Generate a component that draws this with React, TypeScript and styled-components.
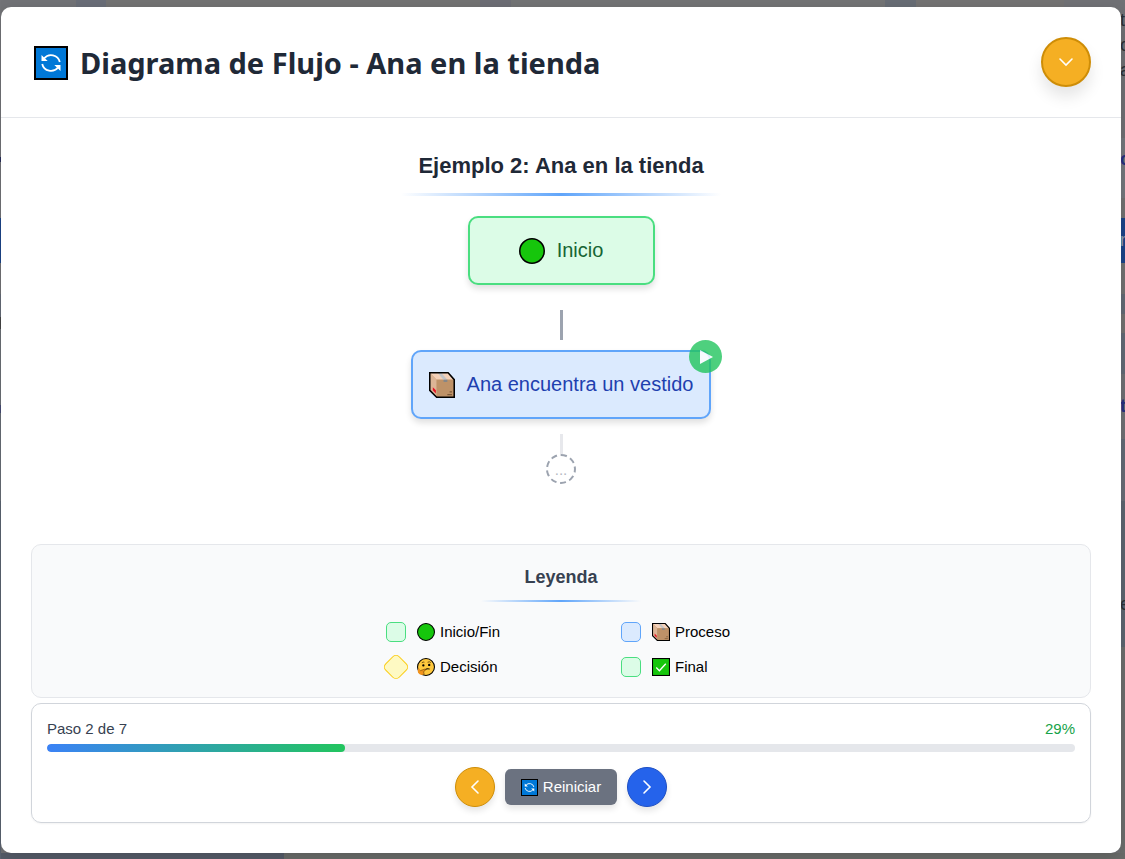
import React from "react";
import styled, { createGlobalStyle, css } from "styled-components";

const GlobalStyle = createGlobalStyle`
  *, *::before, *::after { box-sizing: border-box; }
  html, body { margin: 0; padding: 0; }
  body {
    background: #717275;
    font-family: Arial, "Liberation Sans", sans-serif;
    font-size: 15px;
    color: #111111;
  }
  h1, h2, h3, p { margin: 0; }
  button { font-family: inherit; cursor: pointer; }
`;

/* ---------- dimmed page behind the dialog ---------- */

const Overlay = styled.div`
  position: relative;
  display: flex;
  min-height: 100vh;
  padding: 7px 4px 6px 1px;
  overflow: hidden;
`;

const PageBehind = styled.div`
  position: absolute;
  inset: 0;
  display: flex;
  justify-content: space-between;
  overflow: hidden;
  background:
    linear-gradient(90deg, #717276 76px, #696d77 76px 106px, #727272 106px 480px,
      #6c6d74 480px 511px, #727374 511px 885px, #676c74 885px 916px,
      #737272 916px 1064px, #707175 1064px) top / 100% 7px no-repeat,
    linear-gradient(90deg, #555c69 284px, #6a6c6a 284px) bottom / 100% 6px no-repeat,
    #717275;
`;

const Sliver = styled.div<{ $width: number }>`
  display: flex;
  flex-direction: column;
  width: ${(p) => p.$width}px;
  overflow: hidden;
`;

const Band = styled.div<{ $height: number; $color: string; $ink?: string }>`
  flex: none;
  height: ${(p) => p.$height}px;
  background: ${(p) => p.$color};
  color: ${(p) => p.$ink ?? "#2c3036"};
  font-size: 18px;
  line-height: 25px;
  padding-top: ${(p) => (p.$height > 100 ? 8 : 0)}px;
  display: flex;
  flex-direction: column;
  justify-content: ${(p) => (p.$height > 100 ? "flex-start" : "center")};
`;

/* ---------- dialog ---------- */

const Dialog = styled.section`
  position: relative;
  flex: 1;
  min-width: 0;
  display: flex;
  flex-direction: column;
  background: #ffffff;
  border-radius: 10px;
  box-shadow: 0 5px 15px rgba(0, 0, 0, 0.15);
`;

const Header = styled.header`
  display: flex;
  align-items: flex-start;
  justify-content: space-between;
  padding: 30px;
  border-bottom: 1px solid #e5e7eb;
`;

const Title = styled.h1`
  display: flex;
  align-items: center;
  gap: 12px;
  padding: 2px 0 0 3px;
  font-family: "Segoe UI", "Noto Sans", "Open Sans", sans-serif;
  font-size: 29px;
  line-height: 50px;
  height: 50px;
  font-weight: 700;
  color: #1f2937;
`;

const tones = {
  amber: css`
    background: #f5af23;
    border-color: #ce8d07;
  `,
  blue: css`
    background: #2563eb;
    border-color: #1e4fc4;
  `,
};

const RoundButton = styled.button<{ $size: number; $tone: keyof typeof tones }>`
  flex: none;
  display: flex;
  align-items: center;
  justify-content: center;
  width: ${(p) => p.$size}px;
  height: ${(p) => p.$size}px;
  padding: 0;
  border: ${(p) => (p.$size > 40 ? 2 : 1)}px solid;
  border-radius: 50%;
  color: #ffffff;
  box-shadow: ${(p) =>
    p.$size > 40
      ? "0 10px 15px rgba(0, 0, 0, 0.1)"
      : "0 4px 6px rgba(0, 0, 0, 0.1)"};
  ${(p) => tones[p.$tone]}
`;

const Body = styled.main`
  flex: 1;
  display: flex;
  flex-direction: column;
  padding: 30px;
`;

const Diagram = styled.div`
  flex: 1;
  display: flex;
  flex-direction: column;
  align-items: center;
  padding-bottom: 60px;
`;

const DiagramTitle = styled.h2`
  width: 320px;
  max-width: 100%;
  margin-bottom: 20px;
  text-align: center;
  font-size: 22px;
  line-height: 35px;
  color: #1f2937;
  white-space: nowrap;

  &::after {
    content: "";
    display: block;
    height: 3px;
    margin-top: 10px;
    background: linear-gradient(90deg, transparent, #60a5fa, transparent);
  }
`;

const nodeTones = {
  green: css`
    background: #dcfce7;
    border-color: #4ade80;
    color: #166534;
  `,
  blue: css`
    background: #dbeafe;
    border-color: #60a5fa;
    color: #1e40af;
  `,
  yellow: css`
    background: #fef9c3;
    border-color: #facc15;
  `,
};

const Node = styled.div<{ $tone: keyof typeof nodeTones }>`
  position: relative;
  display: flex;
  align-items: center;
  justify-content: center;
  gap: 12px;
  min-width: 187px;
  height: 69px;
  padding: 0 16px;
  border: 2px solid;
  border-radius: 10px;
  box-shadow: 0 4px 6px rgba(0, 0, 0, 0.12);
  font-size: 20px;
  white-space: nowrap;
  ${(p) => nodeTones[p.$tone]}
`;

const PlayBadge = styled.span`
  position: absolute;
  top: -12px;
  right: -13px;
  display: flex;
  align-items: center;
  justify-content: center;
  width: 33px;
  height: 33px;
  border-radius: 50%;
  background: #22c55e;
  opacity: 0.8;
`;

const Connector = styled.div<{ $pending?: boolean }>`
  width: 3px;
  height: ${(p) => (p.$pending ? 20 : 30)}px;
  margin: ${(p) => (p.$pending ? "15px 0 0" : "25px 0 10px")};
  background: ${(p) => (p.$pending ? "#e7e8ec" : "#9ca3af")};
`;

const PendingStep = styled.div`
  display: flex;
  align-items: center;
  justify-content: center;
  width: 30px;
  height: 30px;
  border: 2px dashed #9ca3af;
  border-radius: 50%;
  color: #b4b9c2;
  font-size: 15px;
`;

/* ---------- legend ---------- */

const Legend = styled.section`
  display: flex;
  flex-direction: column;
  align-items: center;
  padding: 20px;
  margin-bottom: 5px;
  background: #f9fafb;
  border: 1px solid #e5e7eb;
  border-radius: 10px;
`;

const LegendTitle = styled.h3`
  width: 160px;
  margin-bottom: 20px;
  text-align: center;
  font-size: 18px;
  line-height: 25px;
  color: #374151;

  &::after {
    content: "";
    display: block;
    height: 2px;
    margin-top: 10px;
    background: linear-gradient(90deg, transparent, #60a5fa, transparent);
  }
`;

const LegendGrid = styled.ul`
  display: grid;
  grid-template-columns: 115px 115px;
  gap: 15px 120px;
  margin: 0;
  padding: 0;
  list-style: none;
`;

const LegendItem = styled.li`
  display: flex;
  align-items: center;
  gap: 11px;
  height: 20px;
  color: #000000;
  white-space: nowrap;
`;

const Swatch = styled.span<{ $tone: keyof typeof nodeTones; $diamond?: boolean }>`
  flex: none;
  width: 20px;
  height: 20px;
  border: 1px solid;
  border-radius: 5px;
  ${(p) => nodeTones[p.$tone]}
  ${(p) => p.$diamond && "transform: rotate(45deg);"}
`;

const IconLabel = styled.span`
  display: flex;
  align-items: center;
  gap: 5px;
  line-height: 18px;
`;

/* ---------- progress ---------- */

const ProgressCard = styled.section`
  padding: 15px;
  border: 1px solid #d1d5db;
  border-radius: 10px;
  box-shadow: 0 1px 2px rgba(0, 0, 0, 0.05);
`;

const ProgressHead = styled.div`
  display: flex;
  justify-content: space-between;
  margin-bottom: 5px;
  line-height: 20px;
  color: #374151;
`;

const Percent = styled.span`
  color: #16a34a;
`;

const Track = styled.div`
  height: 8px;
  border-radius: 4px;
  background: #e5e7eb;
  overflow: hidden;
`;

const Fill = styled.div`
  height: 100%;
  border-radius: 4px;
  background: linear-gradient(90deg, #3b82f6, #22c55e);
`;

const Controls = styled.div`
  display: flex;
  align-items: center;
  justify-content: center;
  gap: 10px;
  margin-top: 15px;
`;

const ResetButton = styled.button`
  display: flex;
  align-items: center;
  gap: 5px;
  height: 36px;
  padding: 0 16px;
  border: 0;
  border-radius: 6px;
  background: #6b7280;
  color: #ffffff;
  font-size: 15px;
  line-height: 18px;
  box-shadow: 0 4px 6px rgba(0, 0, 0, 0.1);
`;

/* ---------- drawings ---------- */

type IconProps = { size: number };

const Svg = ({ size, children }: IconProps & { children: React.ReactNode }) => (
  <svg width={size} height={size} viewBox="0 0 34 34" aria-hidden="true">
    {children}
  </svg>
);

const RefreshIcon = ({ size }: IconProps) => (
  <Svg size={size}>
    <rect x="1" y="1" width="32" height="32" fill="#0078d7" stroke="#000" strokeWidth="2" />
    <g fill="none" stroke="#fff" strokeWidth="1.8">
      <path d="M10 12.500A9 9 0 0 1 25.800 16" />
      <path d="M24 21.500A9 9 0 0 1 8.200 18" />
    </g>
    <path d="M7.500 9v6h6.200z M26.500 25V19h-6.200z" fill="#fff" />
  </Svg>
);

const GreenCircleIcon = ({ size }: IconProps) => (
  <Svg size={size}>
    <circle cx="17" cy="17" r="16" fill="#16c60c" stroke="#000" strokeWidth="2" />
  </Svg>
);

const PackageIcon = ({ size }: IconProps) => (
  <Svg size={size}>
    <path d="M1 1h24l8 9v23H10L1 24z" fill="#c69a6e" />
    <path d="M1 1h24l8 9H10z" fill="#f4d1b9" />
    <path d="M1 1l9 9v23l-9-9z" fill="#dcb596" />
    <path d="M10 10h23v23H10z" fill="#be9268" />
    <path d="M11 1h5l8 9h-5z" fill="#c3c4c6" />
    <path d="M19 10h5v3h-5z" fill="#84868a" />
    <path d="M5 20l4 4v4l-4-4z" fill="#e81224" />
    <path d="M27 26h3M24 29.500h6" stroke="#7b5938" strokeWidth="1.500" />
    <path d="M1 1h24l8 9v23H10L1 24z" fill="none" stroke="#000" strokeWidth="2" />
  </Svg>
);

const ThinkingIcon = ({ size }: IconProps) => (
  <Svg size={size}>
    <circle cx="17" cy="17" r="16" fill="#ffc83d" stroke="#000" strokeWidth="2" />
    <circle cx="12" cy="14" r="2.200" fill="#000" />
    <circle cx="23" cy="13" r="2.200" fill="#000" />
    <path d="M9 9q3-2 5-1M20 8q4-2 6 1" fill="none" stroke="#5c3b06" strokeWidth="1.600" />
    <path d="M15 22q5-3 9-1" fill="none" stroke="#000" strokeWidth="2" />
    <path d="M2 20q4-1 4 4l9-3q3 1 0 3l-3 2q3 3 0 5-6 3-10-3-1-4 0-8z" fill="#f0921c" />
    <path
      d="M6 24l9-3q3 1 0 3l-3 2q3 3 0 5"
      fill="none"
      stroke="#7a4a08"
      strokeWidth="1.300"
    />
  </Svg>
);

const CheckIcon = ({ size }: IconProps) => (
  <Svg size={size}>
    <rect x="1" y="1" width="32" height="32" fill="#16c60c" stroke="#000" strokeWidth="2" />
    <path d="M8 18l6 6L26 11" fill="none" stroke="#fff" strokeWidth="2.500" />
  </Svg>
);

const Chevron = ({ d, w, h }: { d: string; w: number; h: number }) => (
  <svg width={w} height={h} viewBox={`0 0 ${w} ${h}`} aria-hidden="true">
    <path d={d} fill="none" stroke="currentColor" strokeWidth="1.6" strokeLinecap="round" />
  </svg>
);

/* ---------- page ---------- */

const legend = [
  { label: "Inicio/Fin", tone: "green", Icon: GreenCircleIcon },
  { label: "Proceso", tone: "blue", Icon: PackageIcon },
  { label: "Decisión", tone: "yellow", Icon: ThinkingIcon, diamond: true },
  { label: "Final", tone: "green", Icon: CheckIcon },
] as const;

const step = 2;
const total = 7;
const percent = Math.round((step / total) * 100);

export default function App() {
  return (
    <>
      <GlobalStyle />
      <Overlay>
        <PageBehind aria-hidden="true">
          <Sliver $width={1}>
            <Band $height={157} $color="#727377" />
            <Band $height={5} $color="#272e5a" />
            <Band $height={56} $color="#727377" />
            <Band $height={45} $color="#1b4489" />
            <Band $height={31} $color="#717275" />
            <Band $height={23} $color="#656b77" />
            <Band $height={12} $color="#454545" />
            <Band $height={76} $color="#6b6f76" />
            <Band $height={8} $color="#454b74" />
            <Band $height={88} $color="#686d76" />
            <Band $height={358} $color="#5b6370" />
          </Sliver>
          <Sliver $width={5}>
            <Band $height={138} $color="#707175">
              <span>t</span>
              <span>o</span>
              <span>a</span>
            </Band>
            <Band $height={42} $color="#74787d" $ink="#273080">
              <b>o</b>
            </Band>
            <Band $height={18} $color="#74787d" />
            <Band $height={20} $color="#727272" />
            <Band $height={45} $color="#1b4489" $ink="#8f98a8">
              r
            </Band>
            <Band $height={31} $color="#727272" />
            <Band $height={20} $color="#636a75" />
            <Band $height={19} $color="#737271" />
            <Band $height={41} $color="#626a76" />
            <Band $height={65} $color="#6f7175" $ink="#273080">
              <b>ta</b>
            </Band>
            <Band $height={31} $color="#626a76" />
            <Band $height={31} $color="#686d77" />
            <Band $height={83} $color="#5d6671" />
            <Band $height={40} $color="#5d6671">
              e
            </Band>
            <Band $height={23} $color="#5d6671" />
            <Band $height={206} $color="#6c6e6d" />
          </Sliver>
        </PageBehind>

        <Dialog role="dialog" aria-labelledby="dialog-title">
          <Header>
            <Title id="dialog-title">
              <RefreshIcon size={34} />
              Diagrama de Flujo - Ana en la tienda
            </Title>
            <RoundButton type="button" $size={50} $tone="amber" aria-label="Minimizar">
              <Chevron w={16} h={10} d="M2 2l6 6 6-6" />
            </RoundButton>
          </Header>

          <Body>
            <Diagram>
              <DiagramTitle>Ejemplo 2: Ana en la tienda</DiagramTitle>
              <Node $tone="green">
                <GreenCircleIcon size={26} />
                Inicio
              </Node>
              <Connector />
              <Node $tone="blue">
                <PackageIcon size={26} />
                Ana encuentra un vestido
                <PlayBadge>
                  <svg width="14" height="16" viewBox="0 0 14 16" aria-hidden="true">
                    <path d="M1 1l13 7-13 7z" fill="#fff" />
                  </svg>
                </PlayBadge>
              </Node>
              <Connector $pending />
              <PendingStep>...</PendingStep>
            </Diagram>

            <Legend>
              <LegendTitle>Leyenda</LegendTitle>
              <LegendGrid>
                {legend.map(({ label, tone, Icon, ...rest }) => (
                  <LegendItem key={label}>
                    <Swatch $tone={tone} $diamond={"diamond" in rest} />
                    <IconLabel>
                      <Icon size={18} />
                      {label}
                    </IconLabel>
                  </LegendItem>
                ))}
              </LegendGrid>
            </Legend>

            <ProgressCard>
              <ProgressHead>
                <span>
                  Paso {step} de {total}
                </span>
                <Percent>{percent}%</Percent>
              </ProgressHead>
              <Track
                role="progressbar"
                aria-label="Progreso"
                aria-valuenow={percent}
                aria-valuemin={0}
                aria-valuemax={100}
              >
                <Fill style={{ width: `${percent}%` }} />
              </Track>
              <Controls>
                <RoundButton type="button" $size={40} $tone="amber" aria-label="Anterior">
                  <Chevron w={10} h={16} d="M8 2L2 8l6 6" />
                </RoundButton>
                <ResetButton type="button">
                  <RefreshIcon size={17} />
                  Reiniciar
                </ResetButton>
                <RoundButton type="button" $size={40} $tone="blue" aria-label="Siguiente">
                  <Chevron w={10} h={16} d="M2 2l6 6-6 6" />
                </RoundButton>
              </Controls>
            </ProgressCard>
          </Body>
        </Dialog>
      </Overlay>
    </>
  );
}
